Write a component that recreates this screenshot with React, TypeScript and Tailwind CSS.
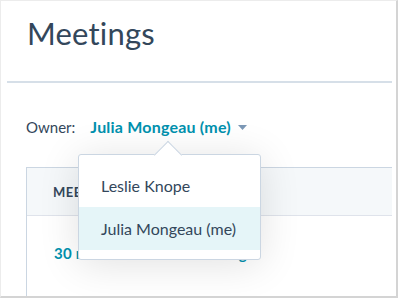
import React from "react";

export default function App() {
  const font = { fontFamily: "Lato, 'Open Sans', sans-serif" };
  return (
    <div className="w-[398px] h-[299px] bg-white overflow-hidden" style={font}>
      <div className="relative w-[398px] h-[298px] border-t border-l border-[#ececec] border-r-2 border-b-2 border-r-[#d4d4d4] border-b-[#d4d4d4] bg-white overflow-hidden">
        <div className="pl-[6px] pr-[4px]">
          <div className="h-[82px] border-b-2 border-[#d6dfe8] pl-[20px] pt-[13px]">
            <h1 className="text-[31px] leading-[38px] text-[#33475b] font-normal tracking-[0.2px]">Meetings</h1>
          </div>
        </div>
        <div className="pl-[25px] pr-[4px] pt-[33px]">
          <div className="flex items-center h-[22px]">
            <span className="text-[15px] text-[#33475b]">Owner:</span>
            <span className="ml-[15px] text-[16px] text-[#0091ae] font-bold tracking-[0.2px]">Julia Mongeau (me)</span>
            <svg className="ml-[7px]" width="9" height="5" viewBox="0 0 9 5">
              <path d="M0 0h9L4.5 5z" fill="#7c98b6" />
            </svg>
          </div>
          <div className="mt-[29px] border-t border-l border-[#cbd6e2] h-[140px]">
            <div className="h-[48px] bg-[#f5f8fa] border-b border-[#dfe3eb] flex items-center pl-[26px] pt-[2px]">
              <span className="text-[13px] font-bold text-[#33475b] tracking-[0.5px]">MEETING NAME</span>
            </div>
            <div className="pl-[27px] pt-[25px]">
              <span className="text-[15px] leading-[20px] font-bold text-[#0091ae] tracking-[0.2px]">30 minute standard meeting</span>
            </div>
          </div>
        </div>

        <div className="absolute left-[77px] top-[153px] w-[183px] h-[106px] bg-white border border-[#cbd6e2] rounded-[3px] shadow-[0_4px_40px_rgba(0,0,0,0.12)]">
          <div className="absolute left-[79px] top-[-10px] w-[20px] h-[20px] rotate-45 bg-white border-t border-l border-[#cbd6e2]" />
          <div className="relative pt-[9px] flex flex-col">
            <div className="h-[43px] flex items-center pl-[22px] text-[16px] text-[#33475b]">Leslie Knope</div>
            <div className="h-[43px] flex items-center pl-[22px] text-[16px] text-[#33475b] bg-[#e5f5f8]">Julia Mongeau (me)</div>
          </div>
        </div>
      </div>
    </div>
  );
}
